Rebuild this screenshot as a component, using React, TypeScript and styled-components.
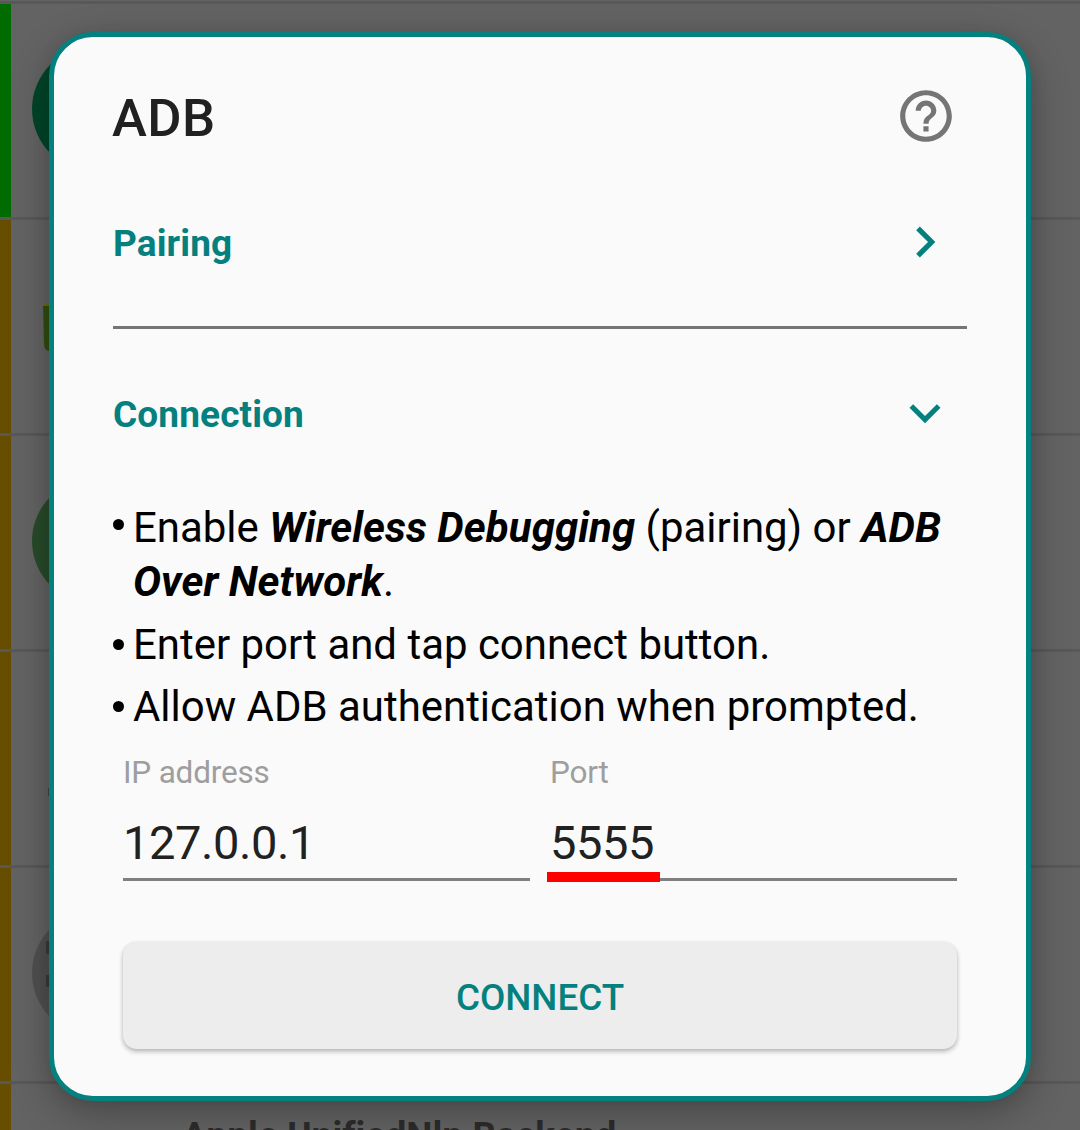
import React from "react";
import styled, { createGlobalStyle } from "styled-components";

const TEAL = "#04807e";

const GlobalStyle = createGlobalStyle`
  body { margin: 0; background: #636363; }
  * { box-sizing: border-box; }
`;

const Screen = styled.div`
  position: relative;
  width: 1080px;
  height: 1130px;
  overflow: hidden;
  background: #636363;
  font-family: Roboto, "Liberation Sans", sans-serif;
`;

const AppList = styled.ul`
  margin: 0;
  padding: 1px 0 0;
  list-style: none;
`;

const AppRow = styled.li<{ $stripe: string }>`
  display: flex;
  align-items: center;
  height: 216px;
  padding-bottom: 3px;
  border-top: 3px solid #585858;
  background: linear-gradient(90deg, ${(p) => p.$stripe} 11px, transparent 11px);
`;

const AppIcon = styled.svg`
  width: 126px;
  height: 126px;
  margin-left: 32px;
  flex: none;
`;

const AppName = styled.div`
  align-self: flex-start;
  margin: 30px 0 0 24px;
  font-size: 37px;
  line-height: 44px;
  font-weight: 700;
  letter-spacing: 0.05px;
  color: #2c2c2c;
  white-space: nowrap;
`;

const Dialog = styled.section`
  position: absolute;
  left: 49px;
  top: 32px;
  width: 982px;
  height: 1069px;
  padding: 48px 59px 0;
  border: 5px solid ${TEAL};
  border-radius: 44px;
  background: #fafafa;
  box-shadow: 0 14px 42px rgba(0, 0, 0, 0.24), 0 3px 18px rgba(0, 0, 0, 0.1);
`;

const Header = styled.header`
  display: flex;
  justify-content: space-between;
  align-items: flex-start;
  height: 62px;
  padding-right: 10px;
`;

const Title = styled.h1`
  margin: 3px 0 0 -1px;
  font-size: 52.5px;
  line-height: 60px;
  font-weight: 500;
  letter-spacing: 0.4px;
  color: #212121;
`;

const Icon = styled.svg`
  width: 62px;
  height: 62px;
  flex: none;
`;

const SectionRow = styled.div<{ $gap: number }>`
  display: flex;
  justify-content: space-between;
  align-items: flex-start;
  height: 63px;
  margin-top: ${(p) => p.$gap}px;
  padding-right: 11px;
`;

const SectionTitle = styled.h2`
  margin: 11px 0 0;
  font-size: 37px;
  line-height: 44px;
  font-weight: 700;
  letter-spacing: 0.12px;
  color: ${TEAL};
`;

const Divider = styled.hr`
  height: 3px;
  margin: 52px 0 0;
  border: 0;
  background: #757575;
`;

const Steps = styled.ul`
  display: flex;
  flex-direction: column;
  gap: 8.5px;
  margin: 56px 0 0;
  padding: 0;
  list-style: none;
`;

const Step = styled.li<{ $bulletTop?: number }>`
  display: flex;
  font-size: 41.95px;
  line-height: 54px;
  color: #000;
  white-space: nowrap;

  b {
    letter-spacing: 0.05px;
  }

  &::before {
    content: "";
    flex: none;
    width: 11px;
    height: 11px;
    margin: ${(p) => p.$bulletTop ?? 21}px 9px 0 0;
    border-radius: 50%;
    background: #000;
  }
`;

const Fields = styled.div`
  display: grid;
  grid-template-columns: 407px 410px;
  column-gap: 17px;
  margin: 19px 0 0 10px;
`;

const Field = styled.label<{ $inset: number }>`
  position: relative;
  display: flex;
  flex-direction: column;
  height: 128px;
  padding-left: ${(p) => p.$inset}px;
  border-bottom: 3px solid #808080;
`;

const FieldLabel = styled.span`
  font-size: 31.5px;
  line-height: 40px;
  letter-spacing: -0.2px;
  color: #9e9e9e;
`;

const FieldValue = styled.span`
  margin-top: 22px;
  font-size: 47px;
  line-height: 56px;
  letter-spacing: -0.4px;
  color: #212121;
`;

const Highlight = styled.span`
  position: absolute;
  left: 0;
  bottom: -4px;
  width: 113px;
  height: 10px;
  background: #ff0000;
`;

const ConnectButton = styled.button`
  display: block;
  width: 834px;
  height: 107px;
  margin: 61px 0 0 10px;
  padding: 3px 0 0;
  border: 0;
  border-radius: 14px;
  background: #ededed;
  box-shadow: 0 3px 5px rgba(0, 0, 0, 0.2), 0 1px 4px rgba(0, 0, 0, 0.12);
  font-family: inherit;
  font-size: 36.75px;
  font-weight: 500;
  color: ${TEAL};
`;

export default function App() {
  return (
    <>
      <GlobalStyle />
      <Screen>
        <AppList>
          <AppRow $stripe="#006c00">
            <AppIcon viewBox="0 0 126 126"><circle cx="63" cy="63" r="63" fill="#00452a" /></AppIcon>
          </AppRow>
          <AppRow $stripe="#664d00">
            <AppIcon viewBox="0 0 126 126">
              <path d="M11 42h80v47H17q-5 0-5-8z" fill="#304e10" />
              <path d="M11 42h80v2H11z" fill="#6b6a0c" />
            </AppIcon>
          </AppRow>
          <AppRow $stripe="#664d00">
            <AppIcon viewBox="0 0 126 126"><circle cx="63" cy="63" r="63" fill="#284b2a" /></AppIcon>
          </AppRow>
          <AppRow $stripe="#664d00">
            <AppIcon viewBox="0 0 126 126"><path d="M16 94h10v8H16z" fill="#3d4545" /></AppIcon>
          </AppRow>
          <AppRow $stripe="#664d00">
            <AppIcon viewBox="0 0 126 126">
              <circle cx="63" cy="63" r="63" fill="#505050" />
              <path d="M14 31h20v13H14zM14 65h20v12H14z" fill="#373b3b" />
            </AppIcon>
          </AppRow>
          <AppRow $stripe="#664d00">
            <AppIcon viewBox="0 0 126 126" />
            <AppName>Apple UnifiedNlp Backend</AppName>
          </AppRow>
        </AppList>

        <Dialog>
          <Header>
            <Title>ADB</Title>
            <Icon viewBox="0 0 24 24" fill="#757575">
              <path d="M11 18h2v-2h-2v2zm1-16C6.48 2 2 6.48 2 12s4.48 10 10 10 10-4.48 10-10S17.52 2 12 2zm0 18c-4.41 0-8-3.59-8-8s3.59-8 8-8 8 3.59 8 8-3.59 8-8 8zm0-14c-2.21 0-4 1.79-4 4h2c0-1.1.9-2 2-2s2 .9 2 2c0 2-3 1.75-3 5h2c0-2.25 3-2.5 3-5 0-2.21-1.79-4-4-4z" />
            </Icon>
          </Header>

          <SectionRow $gap={64}>
            <SectionTitle>Pairing</SectionTitle>
            <Icon viewBox="0 0 24 24" fill={TEAL}>
              <path d="M10 6 8.59 7.41 13.17 12l-4.58 4.59L10 18l6-6z" />
            </Icon>
          </SectionRow>
          <Divider />
          <SectionRow $gap={53}>
            <SectionTitle>Connection</SectionTitle>
            <Icon viewBox="0 0 24 24" fill={TEAL}>
              <path d="M16.59 8.59 12 13.17 7.41 8.59 6 10l6 6 6-6z" />
            </Icon>
          </SectionRow>

          <Steps>
            <Step $bulletTop={18}>
              <span>
                Enable <b><i>Wireless Debugging</i></b> (pairing) or <b><i>ADB<br />Over Network</i></b>.
              </span>
            </Step>
            <Step>Enter port and tap connect button.</Step>
            <Step>Allow ADB authentication when prompted.</Step>
          </Steps>

          <Fields>
            <Field $inset={0}>
              <FieldLabel>IP address</FieldLabel>
              <FieldValue>127.0.0.1</FieldValue>
            </Field>
            <Field $inset={3}>
              <FieldLabel>Port</FieldLabel>
              <FieldValue>5555</FieldValue>
              <Highlight />
            </Field>
          </Fields>

          <ConnectButton type="button">CONNECT</ConnectButton>
        </Dialog>
      </Screen>
    </>
  );
}
